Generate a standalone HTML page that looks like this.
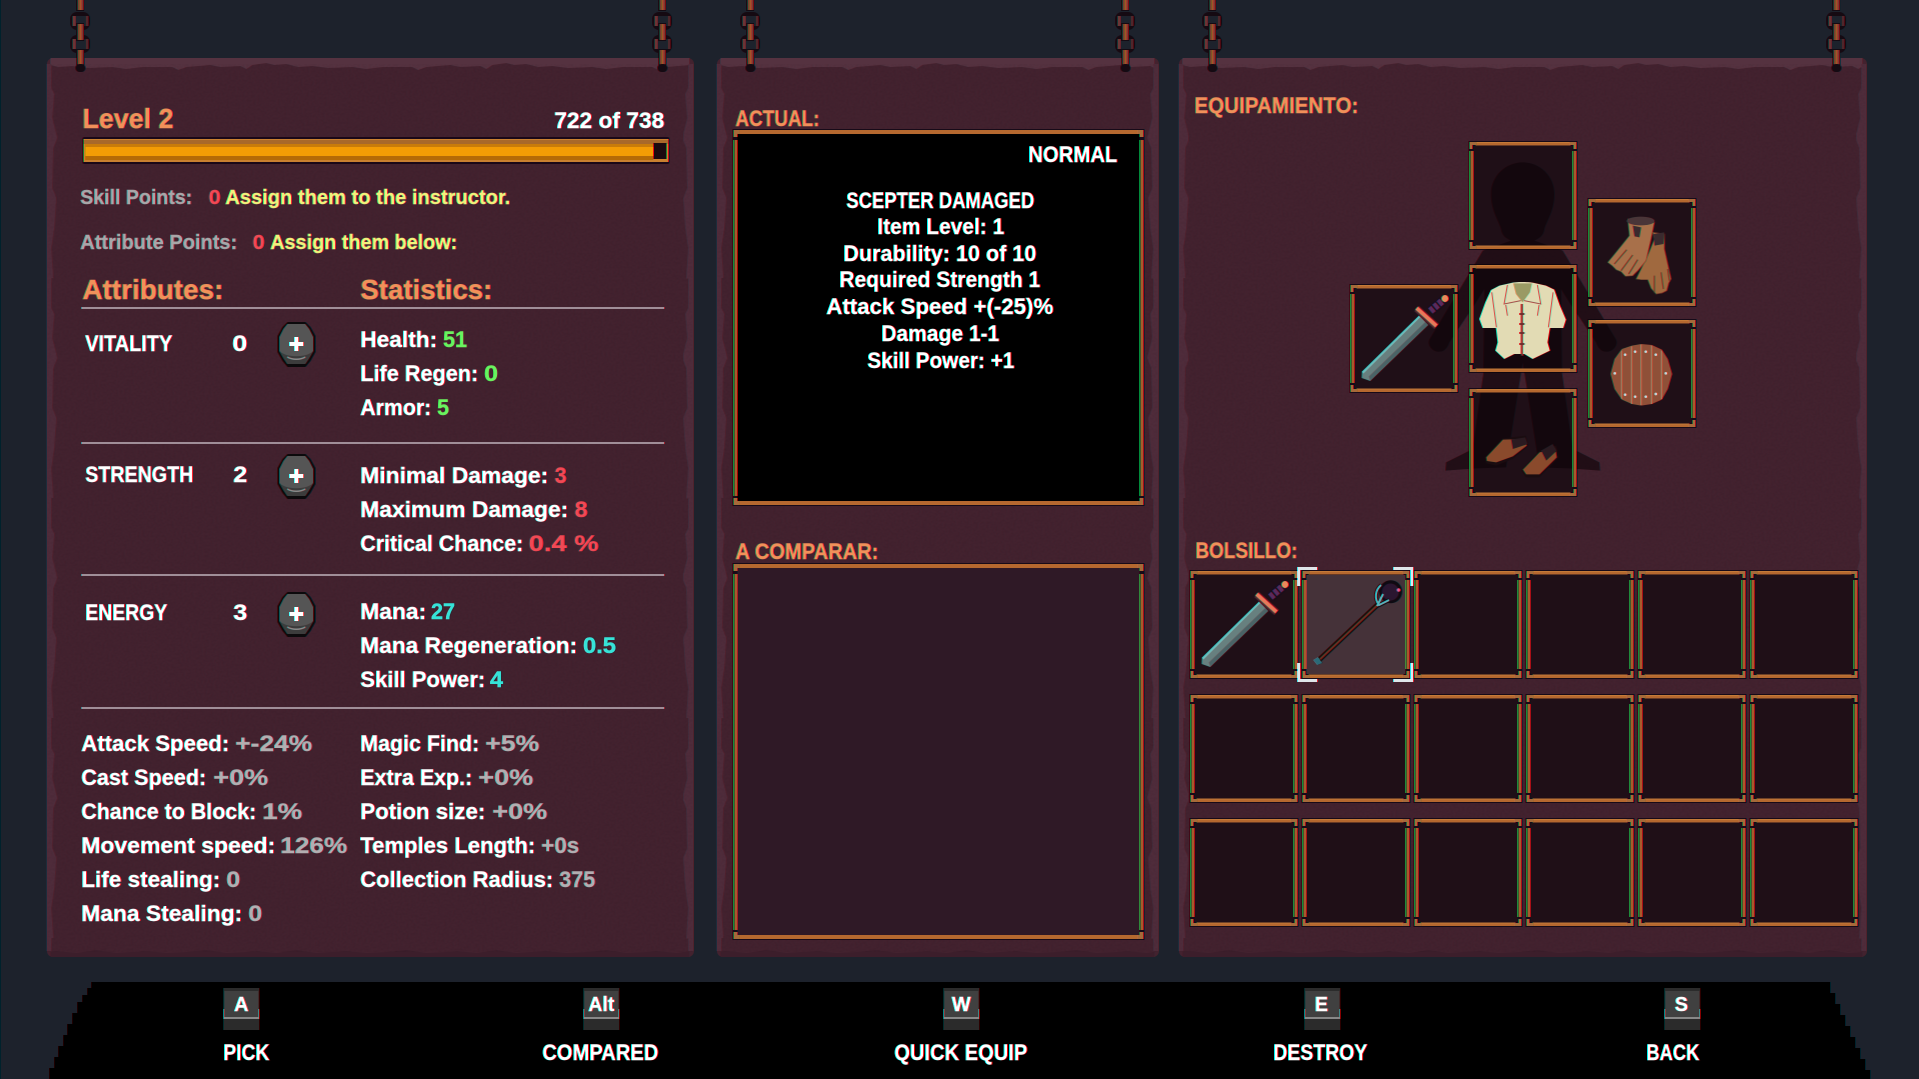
<!DOCTYPE html>
<html><head><meta charset="utf-8"><title>Inventory</title>
<style>
html,body{margin:0;padding:0;background:#1d222c;overflow:hidden;width:1919px;height:1079px}
svg{display:block}
text{font-family:"Liberation Sans Narrow","Liberation Sans",sans-serif;font-weight:700;font-size:22px;fill:#fff;stroke:#fff;stroke-width:.45px;white-space:pre}
.o{fill:#f0915a;stroke:#f0915a}.g{fill:#6bf25e;stroke:#6bf25e}.r{fill:#f04a55;stroke:#f04a55}.c{fill:#35e3d8;stroke:#35e3d8}.v{fill:#b3aeb1;stroke:#b3aeb1}.l{fill:#aaa6a8;stroke:#aaa6a8;font-size:20px}.y{fill:#f3f07c;stroke:#f3f07c;font-size:20px}.rs{fill:#f04a55;stroke:#f04a55;font-size:20px}
.h{font-size:28px;stroke-width:.6px}
</style></head><body>
<svg xmlns="http://www.w3.org/2000/svg" width="1919" height="1079" viewBox="0 0 1919 1079">
<defs>
<filter id="ab" x="0" y="0" width="1919" height="1079" color-interpolation-filters="sRGB" filterUnits="userSpaceOnUse">
<feColorMatrix in="SourceGraphic" type="matrix" values="1 0 0 0 0 0 0 0 0 0 0 0 0 0 0 0 0 0 1 0" result="rc"/>
<feOffset in="rc" dx="1" dy="0" result="ro"/>
<feColorMatrix in="SourceGraphic" type="matrix" values="0 0 0 0 0 0 1 0 0 0 0 0 1 0 0 0 0 0 1 0" result="gb"/>
<feBlend in="ro" in2="gb" mode="screen"/>
</filter>
<filter id="nz" x="0" y="0" width="100%" height="100%"><feTurbulence type="fractalNoise" baseFrequency=".45" numOctaves="2" seed="4"/><feColorMatrix type="matrix" values="0 0 0 0 0 0 0 0 0 0 0 0 0 0 0 1.2 0 0 0 -.45"/></filter>
<pattern id="jt" patternUnits="userSpaceOnUse" width="240" height="16"><path fill="#553240" d="M0 0H240V6L228 7 220 5 206 7 200 11 194 8 174 9 164 7 140 9 132 12 126 9 96 9 80 11 66 9 42 10 26 8 12 9 0 6Z"/></pattern>
<pattern id="jl" patternUnits="userSpaceOnUse" width="14" height="220"><path fill="#4f2c3b" d="M0 0H5V30L8 36 6 60 9 72 11 80 7 90 6 130 10 140 8 170 5 190 7 220H0Z"/></pattern>
<pattern id="jb" patternUnits="userSpaceOnUse" width="200" height="10"><path fill="#3c1e2b" d="M0 10H200V5L180 6 160 3 140 5 120 6 100 4 70 6 50 3 30 6 10 4 0 5Z"/></pattern>
<g id="chain">
<rect x="-10" y="12" width="20" height="18" rx="7" fill="#150a12"/>
<rect x="-10" y="35" width="20" height="18" rx="7" fill="#150a12"/>
<rect x="-5" y="16" width="10" height="10" fill="#1d222c"/>
<rect x="-5" y="39" width="10" height="10" fill="#1d222c"/>
<rect x="-8" y="16" width="3" height="10" fill="#6a3535"/><rect x="5" y="16" width="3" height="10" fill="#4e272c"/>
<rect x="-8" y="39" width="3" height="10" fill="#6a3535"/><rect x="5" y="39" width="3" height="10" fill="#4e272c"/>
<rect x="-4" y="0" width="8" height="11" fill="#150a12"/>
<rect x="-4" y="23" width="8" height="18" fill="#150a12"/>
<rect x="-4" y="49" width="8" height="19" fill="#150a12"/>
<rect x="-3" y="0" width="6" height="10" fill="#7a3b30"/><rect x="-3" y="24" width="6" height="16" fill="#7a3b30"/><rect x="-3" y="50" width="6" height="16" fill="#7a3b30"/>
<rect x="-1" y="0" width="2" height="10" fill="#a05528"/><rect x="-1" y="24" width="2" height="16" fill="#a05528"/><rect x="-1" y="50" width="2" height="16" fill="#a05528"/>
<rect x="-5" y="64" width="10" height="8" rx="4" fill="#150a12"/>
</g>
<g id="slotbg"><rect x="0" y="0" width="109" height="109" fill="#170a18"/><rect x="5" y="5" width="99" height="99" fill="#1f0f17"/></g>
<g id="frame">
<rect x="7" y="1" width="95" height="3.5" fill="#b5682f"/><rect x="7" y="1" width="95" height="1" fill="#c47a38"/>
<rect x="7" y="104.5" width="95" height="3.5" fill="#b5682f"/><rect x="7" y="104.5" width="95" height="1" fill="#c47a38"/>
<rect x="1" y="10" width="4" height="89" fill="#a85a2c"/><rect x="104" y="10" width="4" height="89" fill="#a85a2c"/>
<rect x="1" y="10" width="1" height="89" fill="#3f8a3a"/><rect x="104" y="10" width="1" height="89" fill="#3f8a3a"/>
<path fill="#a56a3a" d="M1 1H8V4H4V8H1ZM108 1H101V4H105V8H108ZM1 108H8V105H4V101H1ZM108 108H101V105H105V101H108Z"/>
</g>
<g id="sword">
<path fill="#67807f" d="M12.700 87.700 12.500 94 21 97 79 41 70 31.500Z"/>
<path fill="#6fb9b8" d="M12.700 87.700 14.500 89.500 71.500 33 70 31.500Z"/>
<path fill="#4a6366" d="M21 97 19.500 92.500 76 38 79 41Z"/>
<path d="M81 27 94 16" stroke="#190d1c" stroke-width="10"/>
<path d="M81 27 94 16" stroke="#5a2a5c" stroke-width="7" stroke-dasharray="4 1.500"/>
<circle cx="95.500" cy="14.500" r="3.500" fill="#e88a5a"/>
<path d="M67 24.500 87 42.500" stroke="#5a1f2a" stroke-width="7"/>
<path d="M67 24 87 42" stroke="#e8785a" stroke-width="4"/>
</g>
<g id="key"><rect x="0" y="0" width="36" height="42" fill="#2b2b2b"/><rect x="1" y="3" width="34" height="28" fill="#404040"/><rect x="0" y="29" width="36" height="2" fill="#888"/><rect x="0" y="21" width="1" height="10" fill="#888"/><rect x="35" y="21" width="1" height="10" fill="#888"/></g>
<g id="plus">
<path fill="#0c0a0c" d="M-9 -22H9L14 -17 19 -8V8L14 17 9 23H-9L-14 17 -19 8V-8L-14 -17Z"/>
<path fill="#555" d="M-9 -20H9L13 -15 17 -7V7L13 14 9 20H-9L-13 14 -17 7V-7L-13 -15Z"/>
<path fill="#3c3c3c" d="M-17 7C-10 14 10 14 17 7L13 14 9 20H-9L-13 14Z"/>
<path fill="none" stroke="#8a8a8a" stroke-width="1.500" d="M-9 13C-4 16 4 16 9 13"/>
<path fill="#fff" d="M-2 -7H2V-2H7V2H2V7H-2V2H-7V-2H-2Z"/>
</g>
</defs>
<g filter="url(#ab)">
<rect width="1919" height="1079" fill="#1d222c"/>

<!-- panels -->
<rect x="46" y="58" width="647" height="899" rx="6" fill="#43222f"/>
<rect x="716" y="58" width="442" height="899" rx="6" fill="#43222f"/>
<rect x="1178" y="58" width="688" height="899" rx="6" fill="#43222f"/>
<g transform="translate(46,58)"><rect x="4" width="639" height="14" fill="url(#jt)"/><rect y="6" width="13" height="887" fill="url(#jl)"/></g>
<g transform="translate(693,58) scale(-1,1)"><rect y="6" width="10" height="887" fill="url(#jl)"/></g>
<g transform="translate(46,947)"><rect x="4" width="639" height="10" fill="url(#jb)"/></g>
<g transform="translate(716,58)"><rect x="4" width="434" height="14" fill="url(#jt)"/><rect y="6" width="13" height="887" fill="url(#jl)"/></g>
<g transform="translate(1158,58) scale(-1,1)"><rect y="6" width="13" height="887" fill="url(#jl)"/></g>
<g transform="translate(716,947)"><rect x="4" width="434" height="10" fill="url(#jb)"/></g>
<g transform="translate(1178,58)"><rect x="4" width="680" height="14" fill="url(#jt)"/><rect y="6" width="10" height="887" fill="url(#jl)"/></g>
<g transform="translate(1866,58) scale(-1,1)"><rect y="6" width="10" height="887" fill="url(#jl)"/></g>
<g transform="translate(1178,947)"><rect x="4" width="680" height="10" fill="url(#jb)"/></g>
<rect x="47" y="64" width="645" height="888" filter="url(#nz)" opacity=".1"/>
<rect x="717" y="64" width="440" height="888" filter="url(#nz)" opacity=".1"/>
<rect x="1179" y="64" width="686" height="888" filter="url(#nz)" opacity=".1"/>

<!-- chains -->
<use href="#chain" x="80"/><use href="#chain" x="662"/><use href="#chain" x="750"/><use href="#chain" x="1125"/><use href="#chain" x="1212"/><use href="#chain" x="1836"/>

<!-- left panel header -->
<g transform="translate(-1,0)">
<text class="o h" x="83" y="128" textLength="91" lengthAdjust="spacingAndGlyphs">Level 2</text>
<text x="555" y="128" textLength="110" lengthAdjust="spacingAndGlyphs">722 of 738</text>
<rect x="83" y="137" width="587" height="27" rx="2" fill="#1a0818"/>
<rect x="84" y="139" width="585" height="23" fill="#c98030"/>
<rect x="84" y="140" width="585" height="4" fill="#a8692a"/>
<rect x="86" y="144" width="568" height="15" fill="#f39c05"/>
<rect x="86" y="144" width="568" height="3" fill="#c97c0a"/>
<rect x="86" y="156" width="568" height="4" fill="#b56a06"/>
<rect x="654" y="143" width="13" height="16" fill="#1a0a10"/>
<text class="l" x="81" y="204" textLength="112" lengthAdjust="spacingAndGlyphs">Skill Points:</text>
<text class="rs" x="209" y="204" textLength="12" lengthAdjust="spacingAndGlyphs">0</text>
<text class="y" x="226" y="204" textLength="285" lengthAdjust="spacingAndGlyphs">Assign them to the instructor.</text>
<text class="l" x="81" y="249" textLength="157" lengthAdjust="spacingAndGlyphs">Attribute Points:</text>
<text class="rs" x="253" y="249" textLength="12" lengthAdjust="spacingAndGlyphs">0</text>
<text class="y" x="271" y="249" textLength="187" lengthAdjust="spacingAndGlyphs">Assign them below:</text>
<text class="o h" x="83" y="299" textLength="141" lengthAdjust="spacingAndGlyphs">Attributes:</text>
<text class="o h" x="361" y="299" textLength="132" lengthAdjust="spacingAndGlyphs">Statistics:</text>
</g>
<g fill="#a08e98"><rect x="81" y="307" width="583" height="2"/><rect x="81" y="442" width="583" height="2"/><rect x="81" y="574" width="583" height="2"/><rect x="81" y="707" width="583" height="2"/></g>

<!-- attributes -->
<text x="85" y="351" textLength="87" lengthAdjust="spacingAndGlyphs">VITALITY</text>
<text x="232" y="351" textLength="15" lengthAdjust="spacingAndGlyphs">0</text>
<text x="85" y="482" textLength="108" lengthAdjust="spacingAndGlyphs">STRENGTH</text>
<text x="233" y="482" textLength="14" lengthAdjust="spacingAndGlyphs">2</text>
<text x="85" y="620" textLength="82" lengthAdjust="spacingAndGlyphs">ENERGY</text>
<text x="233" y="620" textLength="14" lengthAdjust="spacingAndGlyphs">3</text>
<use href="#plus" x="296" y="344"/><use href="#plus" x="296" y="476"/><use href="#plus" x="296" y="614"/>

<!-- stats -->
<g transform="translate(-1,0)">
<text x="361" y="347" textLength="77" lengthAdjust="spacingAndGlyphs">Health:</text><text class="g" x="444" y="347" textLength="24" lengthAdjust="spacingAndGlyphs">51</text>
<text x="361" y="381" textLength="118" lengthAdjust="spacingAndGlyphs">Life Regen:</text><text class="g" x="485" y="381" textLength="14" lengthAdjust="spacingAndGlyphs">0</text>
<text x="361" y="415" textLength="71" lengthAdjust="spacingAndGlyphs">Armor:</text><text class="g" x="438" y="415" textLength="12" lengthAdjust="spacingAndGlyphs">5</text>
<text x="361" y="483" textLength="188" lengthAdjust="spacingAndGlyphs">Minimal Damage:</text><text class="r" x="555" y="483" textLength="12" lengthAdjust="spacingAndGlyphs">3</text>
<text x="361" y="517" textLength="208" lengthAdjust="spacingAndGlyphs">Maximum Damage:</text><text class="r" x="575" y="517" textLength="13" lengthAdjust="spacingAndGlyphs">8</text>
<text x="361" y="551" textLength="163" lengthAdjust="spacingAndGlyphs">Critical Chance:</text><text class="r" x="529" y="551" textLength="70" lengthAdjust="spacingAndGlyphs">0.4 %</text>
<text x="361" y="619" textLength="66" lengthAdjust="spacingAndGlyphs">Mana:</text><text class="c" x="432" y="619" textLength="24" lengthAdjust="spacingAndGlyphs">27</text>
<text x="361" y="653" textLength="217" lengthAdjust="spacingAndGlyphs">Mana Regeneration:</text><text class="c" x="584" y="653" textLength="33" lengthAdjust="spacingAndGlyphs">0.5</text>
<text x="361" y="687" textLength="125" lengthAdjust="spacingAndGlyphs">Skill Power:</text><text class="c" x="491" y="687" textLength="13" lengthAdjust="spacingAndGlyphs">4</text>
<text x="361" y="751" textLength="119" lengthAdjust="spacingAndGlyphs">Magic Find:</text><text class="v" x="486" y="751" textLength="54" lengthAdjust="spacingAndGlyphs">+5%</text>
<text x="361" y="785" textLength="112" lengthAdjust="spacingAndGlyphs">Extra Exp.:</text><text class="v" x="479" y="785" textLength="55" lengthAdjust="spacingAndGlyphs">+0%</text>
<text x="361" y="819" textLength="125" lengthAdjust="spacingAndGlyphs">Potion size:</text><text class="v" x="493" y="819" textLength="55" lengthAdjust="spacingAndGlyphs">+0%</text>
<text x="361" y="853" textLength="175" lengthAdjust="spacingAndGlyphs">Temples Length:</text><text class="v" x="542" y="853" textLength="38" lengthAdjust="spacingAndGlyphs">+0s</text>
<text x="361" y="887" textLength="193" lengthAdjust="spacingAndGlyphs">Collection Radius:</text><text class="v" x="560" y="887" textLength="36" lengthAdjust="spacingAndGlyphs">375</text>
</g>
<text x="81" y="751" textLength="148" lengthAdjust="spacingAndGlyphs">Attack Speed:</text><text class="v" x="235" y="751" textLength="77" lengthAdjust="spacingAndGlyphs">+-24%</text>
<text x="81" y="785" textLength="125" lengthAdjust="spacingAndGlyphs">Cast Speed:</text><text class="v" x="213" y="785" textLength="55" lengthAdjust="spacingAndGlyphs">+0%</text>
<text x="81" y="819" textLength="175" lengthAdjust="spacingAndGlyphs">Chance to Block:</text><text class="v" x="262" y="819" textLength="40" lengthAdjust="spacingAndGlyphs">1%</text>
<text x="81" y="853" textLength="194" lengthAdjust="spacingAndGlyphs">Movement speed:</text><text class="v" x="280" y="853" textLength="67" lengthAdjust="spacingAndGlyphs">126%</text>
<text x="81" y="887" textLength="139" lengthAdjust="spacingAndGlyphs">Life stealing:</text><text class="v" x="226" y="887" textLength="14" lengthAdjust="spacingAndGlyphs">0</text>
<text x="81" y="921" textLength="161" lengthAdjust="spacingAndGlyphs">Mana Stealing:</text><text class="v" x="248" y="921" textLength="14" lengthAdjust="spacingAndGlyphs">0</text>

<!-- middle panel -->
<g transform="translate(-1,0)">
<text class="o" x="736" y="126" textLength="84" lengthAdjust="spacingAndGlyphs">ACTUAL:</text>
<rect x="733" y="129" width="412" height="377" fill="#170a18"/>
<rect x="738" y="134" width="402" height="367" fill="#000"/>
<rect x="740" y="130" width="398" height="4" fill="#b5682f"/><rect x="740" y="501" width="398" height="4" fill="#b5682f"/>
<rect x="734" y="140" width="4" height="356" fill="#a85a2c"/><rect x="1140" y="140" width="4" height="356" fill="#a85a2c"/>
<rect x="734" y="140" width="1" height="356" fill="#3f8a3a"/><rect x="1140" y="140" width="1" height="356" fill="#3f8a3a"/>
<path fill="#a56a3a" d="M734 130H740V134H738V137H734ZM1144 130H1138V134H1140V137H1144ZM734 505H740V501H738V498H734ZM1144 505H1138V501H1140V498H1144Z"/>
<text x="1029" y="162" textLength="89" lengthAdjust="spacingAndGlyphs">NORMAL</text>
<text class="o" x="736" y="559" textLength="143" lengthAdjust="spacingAndGlyphs">A COMPARAR:</text>
<rect x="733" y="563" width="412" height="377" fill="#170a18"/>
<rect x="738" y="568" width="402" height="367" fill="#2f1926"/>
<rect x="740" y="564" width="398" height="4" fill="#b5682f"/><rect x="740" y="935" width="398" height="4" fill="#b5682f"/>
<rect x="734" y="574" width="4" height="356" fill="#a85a2c"/><rect x="1140" y="574" width="4" height="356" fill="#a85a2c"/>
<rect x="734" y="574" width="1" height="356" fill="#3f8a3a"/><rect x="1140" y="574" width="1" height="356" fill="#3f8a3a"/>
<path fill="#a56a3a" d="M734 564H740V568H738V571H734ZM1144 564H1138V568H1140V571H1144ZM734 939H740V935H738V932H734ZM1144 939H1138V935H1140V932H1144Z"/>
</g>
<text x="846" y="208" textLength="188" lengthAdjust="spacingAndGlyphs">SCEPTER DAMAGED</text>
<text x="877" y="234" textLength="127" lengthAdjust="spacingAndGlyphs">Item Level: 1</text>
<text x="843" y="261" textLength="193" lengthAdjust="spacingAndGlyphs">Durability: 10 of 10</text>
<text x="839" y="287" textLength="201" lengthAdjust="spacingAndGlyphs">Required Strength 1</text>
<text x="826" y="314" textLength="227" lengthAdjust="spacingAndGlyphs">Attack Speed +(-25)%</text>
<text x="881" y="341" textLength="118" lengthAdjust="spacingAndGlyphs">Damage 1-1</text>
<text x="867" y="368" textLength="147" lengthAdjust="spacingAndGlyphs">Skill Power: +1</text>

<!-- right panel -->
<text class="o" x="1194" y="113" textLength="164" lengthAdjust="spacingAndGlyphs">EQUIPAMIENTO:</text>
<g transform="translate(-1,-1)">
<use href="#slotbg" x="1469" y="142"/><use href="#slotbg" x="1588" y="199"/><use href="#slotbg" x="1469" y="265"/><use href="#slotbg" x="1350" y="285"/><use href="#slotbg" x="1588" y="320"/><use href="#slotbg" x="1469" y="389"/>
<g transform="translate(1340,130) scale(.33333)">
<path fill="#0c0206" opacity=".6" d="M550 100C600 100 645 140 645 195C645 245 622 275 615 300C612 322 598 328 585 335L670 365L745 490L830 632C838 650 818 670 800 668C785 668 775 655 770 640L690 520L665 480L668 733L700 960L780 1000L782 1025L690 1018L600 1015L550 700L500 1015L410 1018L318 1025L320 1000L400 960L432 733L435 480L410 520L330 640C325 655 315 668 300 668C282 670 262 650 270 632L355 490L430 365L515 335C502 328 488 322 485 300C478 275 455 245 455 195C455 140 500 100 550 100Z"/>
</g>
<use href="#frame" x="1469" y="142"/><use href="#frame" x="1588" y="199"/><use href="#frame" x="1469" y="265"/><use href="#frame" x="1350" y="285"/><use href="#frame" x="1588" y="320"/><use href="#frame" x="1469" y="389"/>
<use href="#sword" x="1350" y="285"/>
<g transform="translate(1340,130) scale(.33333)">
<!-- shirt -->
<path fill="#e2dbb4" d="M515 462C530 458 570 458 585 462L620 470L645 482L662 530L680 572L672 597L632 597L625 640L632 665L580 690L555 675L525 675L495 690L468 665L475 640L470 597L430 597L420 570L438 520L455 483L480 470Z"/>
<path fill="#9a9a64" d="M522 463H578L572 490L550 520L530 495Z"/>
<path fill="none" stroke="#a0504a" stroke-width="3" d="M505 468L495 525L545 515M595 468L605 525L555 515M458 490L472 595M642 490L628 595M500 528L505 560M600 528L595 560"/>
<path stroke="#8a3a34" stroke-width="7" d="M548 525V680"/>
<path stroke="#6a2a2a" stroke-width="5" d="M540 555H556M540 585H556M540 612H556M540 645H556"/>
<!-- gloves -->
<path fill="#a0693f" stroke="#6a3f2a" stroke-width="2" stroke-linejoin="round" d="M940 310L975 315L975 360L985 405L995 450L988 462L982 485L968 492L950 495L935 478L925 452L905 452L890 450L905 420L925 380L945 330Z"/>
<path fill="#a8704a" stroke="#6a3f2a" stroke-width="2" stroke-linejoin="round" d="M865 270L945 280L935 330L920 395L895 425L880 440L858 442L845 428L830 422L818 410L805 400L820 382L850 345L870 320Z"/>
<ellipse cx="904" cy="276" rx="42" ry="13" fill="#4a3538"/>
<path fill="#3a2a2e" d="M880 290L905 295L900 325L885 322ZM942 315L975 310L972 345L945 350Z"/>
<path fill="none" stroke="#6a3f2a" stroke-width="4" d="M825 405L862 362M845 425L880 378M868 435L895 392M945 440L945 490M965 430L972 480M985 420L990 455"/>
<!-- shield -->
<path fill="#8f5038" d="M847 660L877 650L905 645L937 648L967 662L985 690L998 735L985 780L967 812L937 825L905 830L877 825L847 812L825 780L813 735L825 690Z"/>
<path stroke="#b5775a" stroke-width="4" d="M847 665V810M877 652V825M905 647V828M937 650V825M967 665V810"/>
<g fill="#d8d2d4"><circle cx="827" cy="733" r="4"/><circle cx="858" cy="677" r="4"/><circle cx="888" cy="668" r="4"/><circle cx="920" cy="668" r="4"/><circle cx="950" cy="677" r="4"/><circle cx="980" cy="733" r="4"/><circle cx="858" cy="797" r="4"/><circle cx="888" cy="803" r="4"/><circle cx="920" cy="803" r="4"/><circle cx="950" cy="795" r="4"/></g>
<!-- boots -->
<path fill="#1a0c10" d="M436 985L490 928L560 920L568 950L520 990L470 1010L440 1003ZM546 1025L600 965L650 950L658 985L600 1045L560 1045Z"/>
<path fill="#8a4a2c" d="M440 985L490 932L555 930L562 950L520 982L470 1000L442 996ZM550 1022L600 970L648 958L652 985L600 1036L560 1036Z"/>
<path fill="#2a1a20" d="M515 932L558 925L565 945L520 960ZM605 965L640 945L652 965L620 995Z"/>
</g>
</g>

<text class="o" x="1195" y="558" textLength="102" lengthAdjust="spacingAndGlyphs">BOLSILLO:</text>
<!-- pocket grid -->
<g transform="translate(-1,-1)">
<g id="r1"><use href="#slotbg" x="1190" y="571"/><use href="#frame" x="1190" y="571"/>
<use href="#slotbg" x="1302" y="571"/><use href="#frame" x="1302" y="571"/>
<use href="#slotbg" x="1414" y="571"/><use href="#frame" x="1414" y="571"/>
<use href="#slotbg" x="1526" y="571"/><use href="#frame" x="1526" y="571"/>
<use href="#slotbg" x="1638" y="571"/><use href="#frame" x="1638" y="571"/>
<use href="#slotbg" x="1750" y="571"/><use href="#frame" x="1750" y="571"/></g>
<use href="#r1" y="124"/><use href="#r1" y="248"/>
<rect x="1307" y="576" width="99" height="99" fill="#453239"/>
<use href="#sword" x="1190" y="571"/>
<g transform="translate(1302,571)">
<path d="M15 92.500 76.500 34.500" stroke="#150a0a" stroke-width="5"/>
<path d="M16 91.500 76 35" stroke="#6a3022" stroke-width="2"/>
<path d="M12 90 17 87 21 93 16 95Z" fill="#2a6a78"/>
<circle cx="89.300" cy="21.700" r="11.500" fill="#0f0a12"/><circle cx="89" cy="22" r="8.500" fill="#2a1630"/>
<circle cx="97" cy="20" r="1.800" fill="#e85a90"/>
<path fill="none" stroke="#0f0a12" stroke-width="4" d="M80 15C74 20 73 29 78 35L88 30"/>
<path fill="none" stroke="#5fb0b8" stroke-width="2" d="M80 15C74 20 73 29 78 35L88 30M82 24L76 36"/>
</g>
<g fill="#dfe6ea">
<path d="M1298 568H1318V571H1301V587H1298ZM1414 568H1394V571H1411V587H1414ZM1298 683H1318V680H1301V664H1298ZM1414 683H1394V680H1411V664H1414Z"/>
</g>
</g>

<!-- bottom bar -->
<path fill="#000" d="M91 982H1830V993H1835V1004H1840V1015H1845V1026H1850V1037H1855V1048H1860V1059H1865V1070H1870V1079H49V1068H54V1057H58V1046H63V1035H67V1024H72V1013H77V1002H82V995H87V988H91Z"/>
<use href="#key" x="223" y="988"/>
<use href="#key" x="583" y="988"/>
<use href="#key" x="943" y="988"/>
<use href="#key" x="1304" y="988"/>
<use href="#key" x="1664" y="988"/>
<text x="241" y="1011" text-anchor="middle" style="font-size:20px">A</text>
<text x="588" y="1011" textLength="26" lengthAdjust="spacingAndGlyphs" style="font-size:20px">Alt</text>
<text x="961" y="1011" text-anchor="middle" style="font-size:20px">W</text>
<text x="1321" y="1011" text-anchor="middle" style="font-size:20px">E</text>
<text x="1681" y="1011" text-anchor="middle" style="font-size:20px">S</text>
<text x="223" y="1060" textLength="46" lengthAdjust="spacingAndGlyphs">PICK</text>
<text x="542" y="1060" textLength="116" lengthAdjust="spacingAndGlyphs">COMPARED</text>
<text x="894" y="1060" textLength="133" lengthAdjust="spacingAndGlyphs">QUICK EQUIP</text>
<text x="1273" y="1060" textLength="94" lengthAdjust="spacingAndGlyphs">DESTROY</text>
<text x="1646" y="1060" textLength="53" lengthAdjust="spacingAndGlyphs">BACK</text>
</g>
</svg>
</body></html>
